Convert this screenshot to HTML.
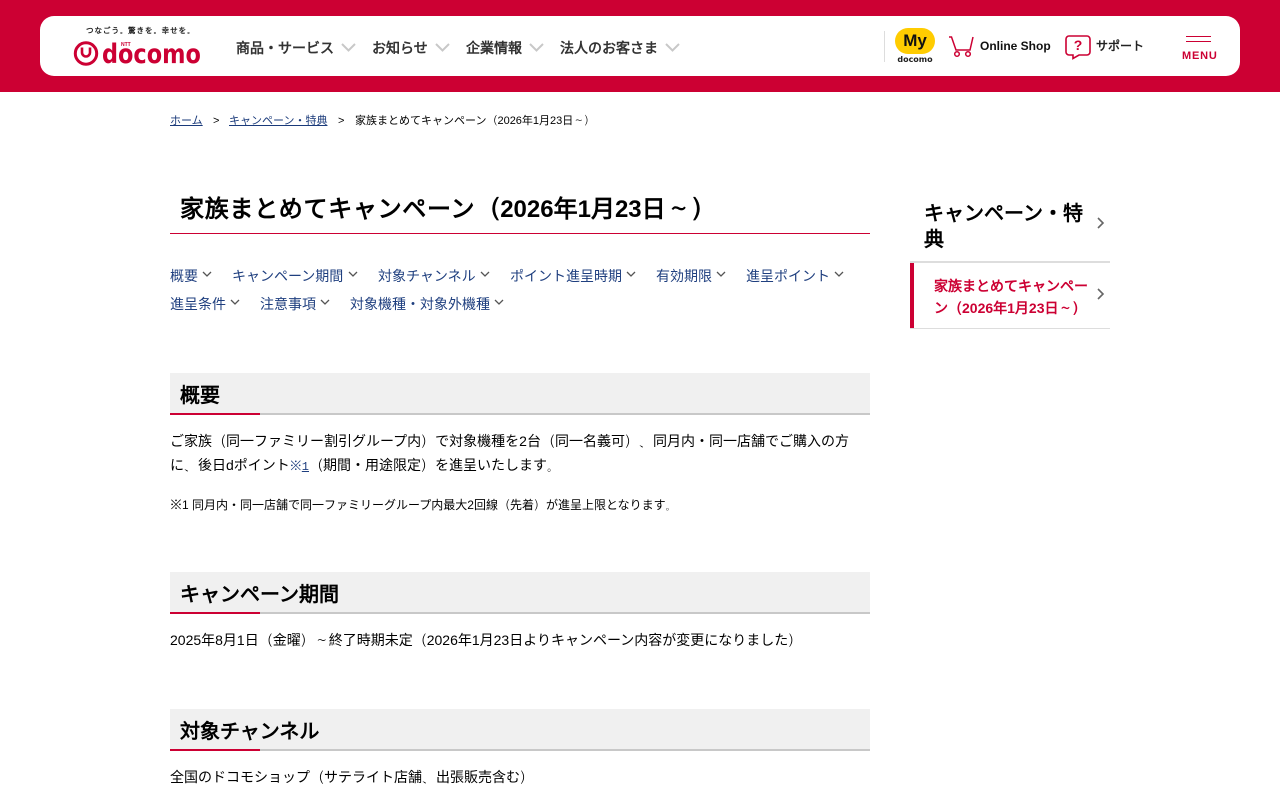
<!DOCTYPE html>
<html lang="en"><head><meta charset="utf-8"><title>家族まとめてキャンペーン</title>
<style>
html,body{margin:0;padding:0;width:1280px;height:800px;overflow:hidden;background:#fff}
body{font-family:"Liberation Sans","NanumGothic",sans-serif;font-size:14px;color:#000;position:relative}
.a{position:absolute;white-space:nowrap}
.hd{left:0;top:0;width:1280px;height:92px;background:#cc0033}
.bar{left:40px;top:16px;width:1200px;height:60px;background:#fff;border-radius:14px}
.nav{font-size:14px;font-weight:bold;color:#333;top:38px;line-height:20px}
.bc{font-size:11px;top:114px;line-height:15px}
.bc u{color:#1a3a7a}
.h2{left:170px;width:700px;height:40px;background:#f0f0f0;border-bottom:2px solid #c8c8c8}
.h2 b{position:absolute;left:10px;top:10px;font-size:20px;line-height:26px;white-space:nowrap}
.h2 i{position:absolute;left:0;bottom:-2px;width:90px;height:2px;background:#cc0033}
.lk{color:#1f3f7f;font-size:14px;line-height:20px}
svg{position:absolute;overflow:visible}
em{font-style:normal;display:inline-block;width:1em}
em.l{text-align:right}em.r{text-align:left}em.c{text-align:center}
.m{font-family:"Liberation Sans","IPAGothic",sans-serif}
</style></head><body>
<div class="a hd"></div><div class="a bar"></div>
<div class="a" style="left:86px;top:26px;font-size:7.5px;font-weight:bold;letter-spacing:1px;line-height:10px;color:#222">つなごう。驚きを。幸せを。</div>
<svg style="left:73px;top:41px" width="26" height="26" viewBox="0 0 26 26"><circle cx="13" cy="12.500" r="10.700" fill="none" stroke="#cc0033" stroke-width="3"/><path d="M9 6.500v5a4 4 0 0 0 8 0v-5" fill="none" stroke="#cc0033" stroke-width="2.600"/></svg>
<div class="a" style="left:102px;top:38.5px;font-size:27px;font-weight:bold;line-height:32px;color:#cc0033;font-family:'DejaVu Sans',sans-serif;transform:scaleX(.83);transform-origin:left">docomo</div>
<div class="a" style="left:121px;top:42px;font-size:5px;font-weight:bold;line-height:6px;color:#cc0033">NTT</div>
<div class="a nav" style="left:236px">商品・サービス</div>
<div class="a nav" style="left:372px">お知らせ</div>
<div class="a nav" style="left:466px">企業情報</div>
<div class="a nav" style="left:560px">法人のお客さま</div>
<svg style="left:0;top:0" width="700" height="92" fill="none" stroke="#c8c8c8" stroke-width="2"><path d="M342 44l6.500 6.500 6.500-6.500M436 44l6.500 6.500 6.500-6.500M530 44l6.500 6.500 6.500-6.500M666 44l6.500 6.500 6.500-6.500"/></svg>
<div class="a" style="left:884px;top:31px;width:1px;height:31px;background:#ddd"></div>
<svg style="left:895px;top:28px" width="40" height="26"><rect x="0" y="0" width="40" height="26" rx="13" fill="#ffcc00"/></svg>
<div class="a" style="left:895px;top:30px;width:40px;text-align:center;font-size:17px;font-weight:bold;line-height:22px;color:#111">My</div>
<div class="a" style="left:895px;top:54px;width:40px;text-align:center;font-size:8px;font-weight:bold;line-height:11px;color:#222;font-family:'DejaVu Sans',sans-serif">docomo</div>
<svg style="left:0;top:0" width="980" height="70" fill="none" stroke="#cc0033" stroke-width="1.500"><path d="M949 37h2.500l4.500 13h14l3-13"/><circle cx="957" cy="54" r="2.300"/><circle cx="968" cy="54" r="2.300"/></svg>
<div class="a" style="left:980px;top:37px;font-size:12px;font-weight:bold;line-height:18px;color:#111">Online Shop</div>
<svg style="left:1065px;top:35px" width="27" height="25" fill="none" stroke="#cc0033" stroke-width="1.600"><path d="M4 1h18a3 3 0 0 1 3 3v13a3 3 0 0 1-3 3h-8l-6 3.500v-3.500h-4a3 3 0 0 1-3-3v-13a3 3 0 0 1 3-3z"/></svg>
<div class="a" style="left:1065px;top:36px;width:26px;text-align:center;font-size:14px;font-weight:bold;line-height:18px;color:#cc0033">?</div>
<div class="a" style="left:1096px;top:37px;font-size:12px;font-weight:bold;line-height:18px;color:#222">サポート</div>
<div class="a" style="left:1186px;top:36px;width:25px;height:1px;background:#cc0033"></div>
<div class="a" style="left:1186px;top:41px;width:25px;height:1px;background:#cc0033"></div>
<div class="a" style="left:1182px;top:49px;font-size:11px;font-weight:bold;letter-spacing:.8px;line-height:14px;color:#cc0033">MENU</div>

<div class="a bc" style="left:170px"><u>ホーム</u></div>
<div class="a bc" style="left:213px">&gt;</div>
<div class="a bc" style="left:229px"><u>キャンペーン・特典</u></div>
<div class="a bc" style="left:338px">&gt;</div>
<div class="a bc" style="left:355px">家族まとめてキャンペーン<em class="l">（</em>2026年1月23日<em class="c">～</em><em class="r">）</em></div>

<div class="a" style="left:180px;top:194px;font-size:24px;font-weight:bold;line-height:32px"><span style="letter-spacing:.7px">家族まとめてキャンペーン</span><em class="l" style="width:25px">（</em>2026年1月23日<em class="c" style="width:26px">～</em><em class="r">）</em></div>
<div class="a" style="left:170px;top:233px;width:700px;height:1px;background:#cc0033"></div>

<div class="a lk" style="left:170px;top:266px">概要</div>
<div class="a lk" style="left:232px;top:266px">キャンペーン期間</div>
<div class="a lk" style="left:378px;top:266px">対象チャンネル</div>
<div class="a lk" style="left:510px;top:266px">ポイント進呈時期</div>
<div class="a lk" style="left:656px;top:266px">有効期限</div>
<div class="a lk" style="left:746px;top:266px">進呈ポイント</div>
<div class="a lk" style="left:170px;top:294px">進呈条件</div>
<div class="a lk" style="left:260px;top:294px">注意事項</div>
<div class="a lk" style="left:350px;top:294px">対象機種・対象外機種</div>
<svg style="left:0;top:0" width="900" height="320" fill="none" stroke="#555" stroke-width="1.300"><path d="M203 272l4 4 4-4M349 272l4 4 4-4M481 272l4 4 4-4M627 272l4 4 4-4M717 272l4 4 4-4M835 272l4 4 4-4M231 300l4 4 4-4M321 300l4 4 4-4M495 300l4 4 4-4"/></svg>

<div class="a h2" style="top:373px"><b>概要</b><i></i></div>
<div class="a" style="left:170px;top:429px;line-height:24px">ご家族<em class="l">（</em>同一ファミリー割引グループ内<em class="r">）</em>で対象機種を2台<em class="l">（</em>同一名義可<em class="r">）</em><em class="r">、</em>同月内・同一店舗でご購入の方<br>に<em class="r">、</em>後日dポイント<span style="color:#1f3f7f;font-size:12px;font-family:'Liberation Mono','IPAGothic',monospace">※<u>1</u></span><em class="l">（</em>期間・用途限定<em class="r">）</em>を進呈いたします。</div>
<div class="a" style="left:170px;top:496px;font-size:12px;line-height:18px"><span class="m">※</span>1 同月内・同一店舗で同一ファミリーグループ内最大2回線<em class="l">（</em>先着<em class="r">）</em>が進呈上限となります。</div>

<div class="a h2" style="top:572px"><b>キャンペーン期間</b><i></i></div>
<div class="a" style="left:170px;top:628px;line-height:24px">2025年8月1日<em class="l">（</em>金曜<em class="r">）</em><em class="c">～</em>終了時期未定<em class="l">（</em>2026年1月23日よりキャンペーン内容が変更になりました<em class="r">）</em></div>

<div class="a h2" style="top:709px"><b>対象チャンネル</b><i></i></div>
<div class="a" style="left:170px;top:765px;line-height:24px">全国のドコモショップ<em class="l">（</em>サテライト店舗<em class="r">、</em>出張販売含む<em class="r">）</em></div>

<div class="a" style="left:924px;top:201px;font-size:20px;font-weight:bold;line-height:26px">キャンペーン・特<br>典</div>
<div class="a" style="left:910px;top:261px;width:200px;height:2px;background:#ddd"></div>
<div class="a" style="left:910px;top:263px;width:4px;height:65px;background:#cc0033"></div>
<div class="a" style="left:910px;top:328px;width:200px;height:1px;background:#ddd"></div>
<div class="a" style="left:934px;top:275px;font-size:14px;font-weight:bold;line-height:22px;color:#cc0033">家族まとめてキャンペー<br>ン<em class="l">（</em>2026年1月23日<em class="c">～</em><em class="r">）</em></div>
<svg style="left:0;top:0" width="1120" height="340" fill="none" stroke="#666" stroke-width="1.600"><path d="M1098 218l5 5-5 5M1098 289l5 5-5 5"/></svg>
</body></html>
